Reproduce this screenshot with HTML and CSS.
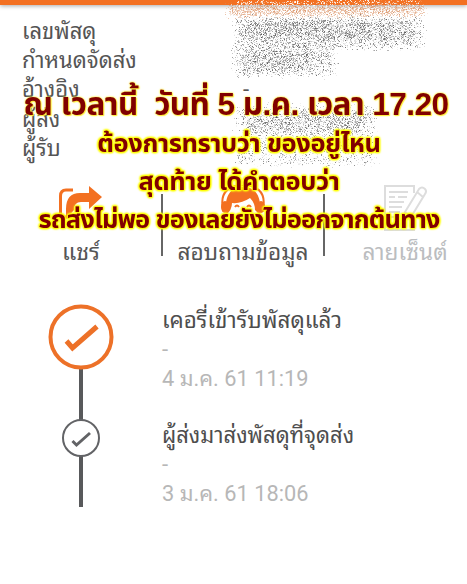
FILE: index.html
```
<!DOCTYPE html>
<html lang="th">
<head>
    <meta charset="UTF-8">
    <meta name="viewport" content="width=device-width, initial-scale=1.0">
    <title>สถานะพัสดุ</title>
    <link rel="stylesheet" href="styles.css">
</head>
<body>
    <div class="top-bar"></div>

    <div class="details">
        <div><span>เลขพัสดุ</span></div>
        <div><span>กำหนดจัดส่ง</span></div>
        <div><span>อ้างอิง</span><span class="detail-value">-</span></div>
        <div><span>ผู้ส่ง</span></div>
        <div><span>ผู้รับ</span></div>
    </div>
    <canvas id="grain" class="grain" width="467" height="180"></canvas>

    <div class="actions">
        <div class="action">
            <svg width="48" height="36" viewBox="0 0 48 36">
                <path d="M16 5H9Q3.500 5 3.500 11V32H34" fill="none" stroke="#f37021" stroke-width="3"/>
                <path d="M9 34V24Q9 8 23 8H32V1L45 12L32 24V17H24Q17 17 17 25Z" fill="#f37021"/>
            </svg>
            <span class="share-label">แชร์</span>
        </div>
        <div class="action">
            <svg width="48" height="36" viewBox="0 0 48 36">
                <path d="M4 24C0 5 13 0 24 0S48 5 44 24" fill="none" stroke="#f37021" stroke-width="2"/>
                <path d="M7 30C5 10 12 2 24 2S43 10 41 30L36 25Q36 18 31 13Q22 19 13 18Q13 25 7 30Z" fill="#f37021"/>
                <ellipse cx="6" cy="22" rx="4" ry="6" fill="#f37021"/>
                <ellipse cx="42" cy="22" rx="4" ry="6" fill="#f37021"/>
                <path d="M16 22Q18 19 20 22M28 22Q30 19 32 22M12 30Q24 39 36 30" fill="none" stroke="#f37021" stroke-width="2"/>
            </svg>
            <span class="ask-label">สอบถามข้อมูล</span>
        </div>
        <div class="action disabled">
            <svg width="44" height="46" viewBox="0 0 44 46" fill="none" stroke="#dddddd" stroke-width="2">
                <path d="M31 8V1H2V45H31V32"/>
                <path d="M6 7H25M6 12H12M15 12H24M6 17H21M6 22H19M6 27H17M6 32H17"/>
                <path d="M22 27L36 4Q39 1 42 4Q44 6 42 9L28 32L21 36ZM34 7L40 12M22 27L28 32"/>
            </svg>
            <span class="sign-label">ลายเซ็นต์</span>
        </div>
    </div>

    <div class="timeline">
        <svg class="track" width="66" height="204" viewBox="0 0 66 204">
            <path d="M33 64V116M33 152V203" stroke="#58595b" stroke-width="4"/>
            <circle cx="33" cy="33" r="30.5" fill="none" stroke="#ed7128" stroke-width="4"/>
            <path d="M18.500 37L24.500 44L49 22.500" fill="none" stroke="#ed7128" stroke-width="5"/>
            <circle cx="33" cy="134" r="18" fill="none" stroke="#626366" stroke-width="2"/>
            <path d="M24.500 137L28.500 141L42 129" fill="none" stroke="#626366" stroke-width="3"/>
        </svg>
        <div class="events">
            <div class="event">
                <div class="event-title first-title">เคอรี่เข้ารับพัสดุแล้ว</div>
                <div>-</div>
                <div class="event-date">4 ม.ค. 61 11:19</div>
            </div>
            <div class="event">
                <div class="event-title second-title">ผู้ส่งมาส่งพัสดุที่จุดส่ง</div>
                <div>-</div>
                <div class="event-date">3 ม.ค. 61 18:06</div>
            </div>
        </div>
    </div>

    <div class="caption">
        <div class="caption-time">ณ เวลานี้&nbsp; วันที่ 5 ม.ค. เวลา 17.20</div>
        <div class="caption-line line-ask">ต้องการทราบว่า ของอยู่ไหน</div>
        <div class="caption-line line-answer">สุดท้าย ได้คำตอบว่า</div>
        <div class="caption-line line-reason">รถส่งไม่พอ ของเลยยังไม่ออกจากต้นทาง</div>
    </div>

    <script src="grain.js"></script>
</body>
</html>
```
FILE: styles.css
```
html, body {
    margin: 0;
    padding: 0;
    height: 100%;
    overflow: hidden;
}
body {
    position: relative;
    background-color: #fff;
    color: #555;
    font-family: Roboto, "Noto Sans Thai Looped", Loma, "Noto Sans Thai", "Noto Sans", sans-serif;
    font-size: 22px;
    line-height: 29px;
    white-space: nowrap;
}
.top-bar {
    height: 5px;
    background-color: #f37021;
    box-shadow: 0 1px 4px rgba(0, 0, 0, 0.35);
}
.details {
    height: 168px;
    padding: 12px 0 0 22px;
    box-sizing: border-box;
}
.details > div {
    display: grid;
    grid-template-columns: 221px 1fr;
    height: 29.2px;
}
.grain {
    position: absolute;
    left: 0;
    top: 0;
}
.actions {
    display: grid;
    grid-template-columns: 162px 162px 162px;
    height: 92px;
    padding-top: 12px;
    box-sizing: border-box;
}
.action {
    position: relative;
    display: flex;
    flex-direction: column;
    align-items: center;
    justify-content: space-between;
    height: 82px;
}
.action + .action::before {
    content: "";
    position: absolute;
    left: -1px;
    top: 9px;
    width: 2px;
    height: 62px;
    background-color: #666;
}
.action span {
    height: 29px;
}
.share-label {
    font-size: 23px;
}
.ask-label, .sign-label {
    font-size: 22.6px;
}
.disabled {
    color: #bbbdc0;
}
.timeline {
    display: flex;
    gap: 48px;
    padding: 39px 0 0 48px;
}
.events {
    padding-top: 2px;
    color: #b7b7b7;
}
.event {
    height: 115px;
}
.event-title {
    color: #4d4d4d;
}
.first-title {
    font-size: 22.4px;
}
.event-date {
    font-size: 21.8px;
}
/* Message laid over the tracking screen */
.caption {
    position: absolute;
    left: 0;
    top: 84px;
    width: 478px;
    text-align: center;
    color: #800000;
    font-family: "Liberation Sans", "Noto Sans Thai", sans-serif;
    font-weight: bold;
}
.caption-time {
    width: 472px;
    height: 40px;
    font-size: 31.5px;
    line-height: 40px;
    letter-spacing: -0.55px;
    text-shadow: 0 0 2px #ffef3a, 0 0 2px #ffef3a, 1px 1px 1px #ffef3a;
}
.caption-line {
    height: 38px;
    font-size: 25.5px;
    line-height: 38px;
    letter-spacing: -0.4px;
    text-shadow: 0 0 2px #ff0, 0 0 2px #ff0, 0 0 3px #ff0, 1px 1px 2px #ff0, -1px -1px 2px #ff0, 1px -1px 2px #ff0, -1px 1px 2px #ff0;
}
.line-reason {
    letter-spacing: -0.9px;
}
```
FILE: grain.js
```
const ctx = document.getElementById('grain').getContext('2d');
let seed = 61;

function rand() {
    seed = (seed + 0x6D2B79F5) | 0;
    let t = Math.imul(seed ^ (seed >>> 15), 1 | seed);
    t = (t + Math.imul(t ^ (t >>> 7), 61 | t)) ^ t;
    return ((t ^ (t >>> 14)) >>> 0) / 4294967296;
}

// Soft-edged patch of one-pixel dots
function scatter(x, y, w, h, count, shade) {
    for (let i = 0; i < count; i++) {
        const px = Math.floor(x + 5 + (w - 10) * rand() + (rand() - rand()) * 8);
        const py = Math.floor(y + 3 + (h - 6) * rand() + (rand() - rand()) * 5);
        ctx.fillStyle = shade(rand());
        ctx.fillRect(px, py, 1, 1);
    }
}

const gray = n => `rgba(60, 60, 60, ${0.04 + n * n * 0.55})`;
const orange = n => `rgba(215, 135, 85, ${0.08 + n * 0.45})`;
const white = n => `rgba(255, 255, 255, ${n})`;

scatter(228, 0, 198, 6, 500, white);
scatter(225, 2, 201, 16, 2400, orange);
scatter(231, 15, 195, 36, 2500, gray);
scatter(240, 18, 175, 25, 2000, gray);
scatter(231, 42, 107, 36, 1500, gray);
scatter(239, 48, 80, 24, 600, gray);
scatter(233, 103, 145, 64, 2200, gray);
scatter(242, 110, 125, 25, 1300, gray);
```
